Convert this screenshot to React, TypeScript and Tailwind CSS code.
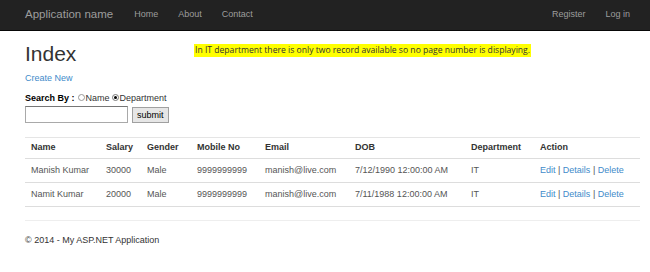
import React from "react";

const rows = [
  { name: "Manish Kumar", salary: "30000", gender: "Male", mobile: "9999999999", email: "manish@live.com", dob: "7/12/1990 12:00:00 AM", dept: "IT" },
  { name: "Namit Kumar", salary: "20000", gender: "Male", mobile: "9999999999", email: "manish@live.com", dob: "7/11/1988 12:00:00 AM", dept: "IT" },
];

const cols = ["w-[75px]", "w-[41px]", "w-[50px]", "w-[68px]", "w-[90px]", "w-[116px]", "w-[69px]", "flex-1"];

export default function App() {
  return (
    <div className="w-[650px] h-[272px] bg-white text-[#333] overflow-hidden" style={{ fontFamily: '"Liberation Sans", Arial, sans-serif' }}>
      <div className="h-[31px] bg-[#222222] border-b border-[#080808] flex items-center pl-[25px] pr-[20px] text-[#9d9d9d]">
        <span className="text-[11.5px] mr-[21px]">Application name</span>
        <div className="flex gap-[20px] text-[9px]">
          <span>Home</span>
          <span>About</span>
          <span>Contact</span>
        </div>
        <div className="ml-auto flex gap-[20px] text-[9px]">
          <span>Register</span>
          <span>Log in</span>
        </div>
      </div>
      <div className="px-[25px] pr-[10px]">
        <div className="flex items-start">
          <h1 className="text-[21px] leading-none mt-[12px] w-[169px]">Index</h1>
          <span className="mt-[13px] bg-[#ffff00] text-[#333] text-[8.6px] leading-[13px] px-px" style={{ fontFamily: '"Open Sans", sans-serif' }}>
            In IT department there is only two record available so no page number is displaying.
          </span>
        </div>
        <div className="mt-[10px] text-[9px] leading-none text-[#428bca]">Create New</div>
        <div className="mt-[11px] flex items-center text-[9px] leading-none text-black">
          <span className="font-bold mr-[3px]">Search By :</span>
          <span className="inline-block w-[7px] h-[7px] rounded-full border border-[#999] mr-px -mt-[3px]"></span>
          <span className="text-[#333] mr-[2px]">Name</span>
          <span className="w-[7px] h-[7px] rounded-full border border-[#777] mr-px -mt-[3px] flex items-center justify-center"><span className="w-[3px] h-[3px] rounded-full bg-black"></span></span>
          <span className="text-[#333]">Department</span>
        </div>
        <div className="mt-[3px] flex items-center gap-[4px]">
          <div className="w-[103px] h-[17px] border border-[#a9a9a9] border-t-[#767676] bg-white"></div>
          <div className="h-[16px] px-[4px] border border-[#a0a0a0] bg-[#e6e6e6] text-[9px] leading-[14px] text-black">submit</div>
        </div>
        <div className="mt-[14px] w-[615px] border-t border-[#e5e5e5] text-[9px]">
          <div className="flex font-bold h-[21px] items-center border-b border-[#ddd] px-[6px]">
            {["Name", "Salary", "Gender", "Mobile No", "Email", "DOB", "Department", "Action"].map((h, i) => (
              <div key={h} className={cols[i]}>{h}</div>
            ))}
          </div>
          {rows.map((r, idx) => (
            <div key={idx} className="flex h-[24px] items-center border-b border-[#ddd] px-[6px] text-[#555]">
              <div className={cols[0]}>{r.name}</div>
              <div className={cols[1]}>{r.salary}</div>
              <div className={cols[2]}>{r.gender}</div>
              <div className={cols[3]}>{r.mobile}</div>
              <div className={cols[4]}>{r.email}</div>
              <div className={cols[5]}>{r.dob}</div>
              <div className={cols[6]}>{r.dept}</div>
              <div className={cols[7]}>
                <span className="text-[#428bca]">Edit</span> | <span className="text-[#428bca]">Details</span> | <span className="text-[#428bca]">Delete</span>
              </div>
            </div>
          ))}
        </div>
        <div className="mt-[13px] w-[615px] border-t border-[#eee]"></div>
        <div className="mt-[15px] text-[9px] leading-none text-[#333]">© 2014 - My ASP.NET Application</div>
      </div>
    </div>
  );
}
